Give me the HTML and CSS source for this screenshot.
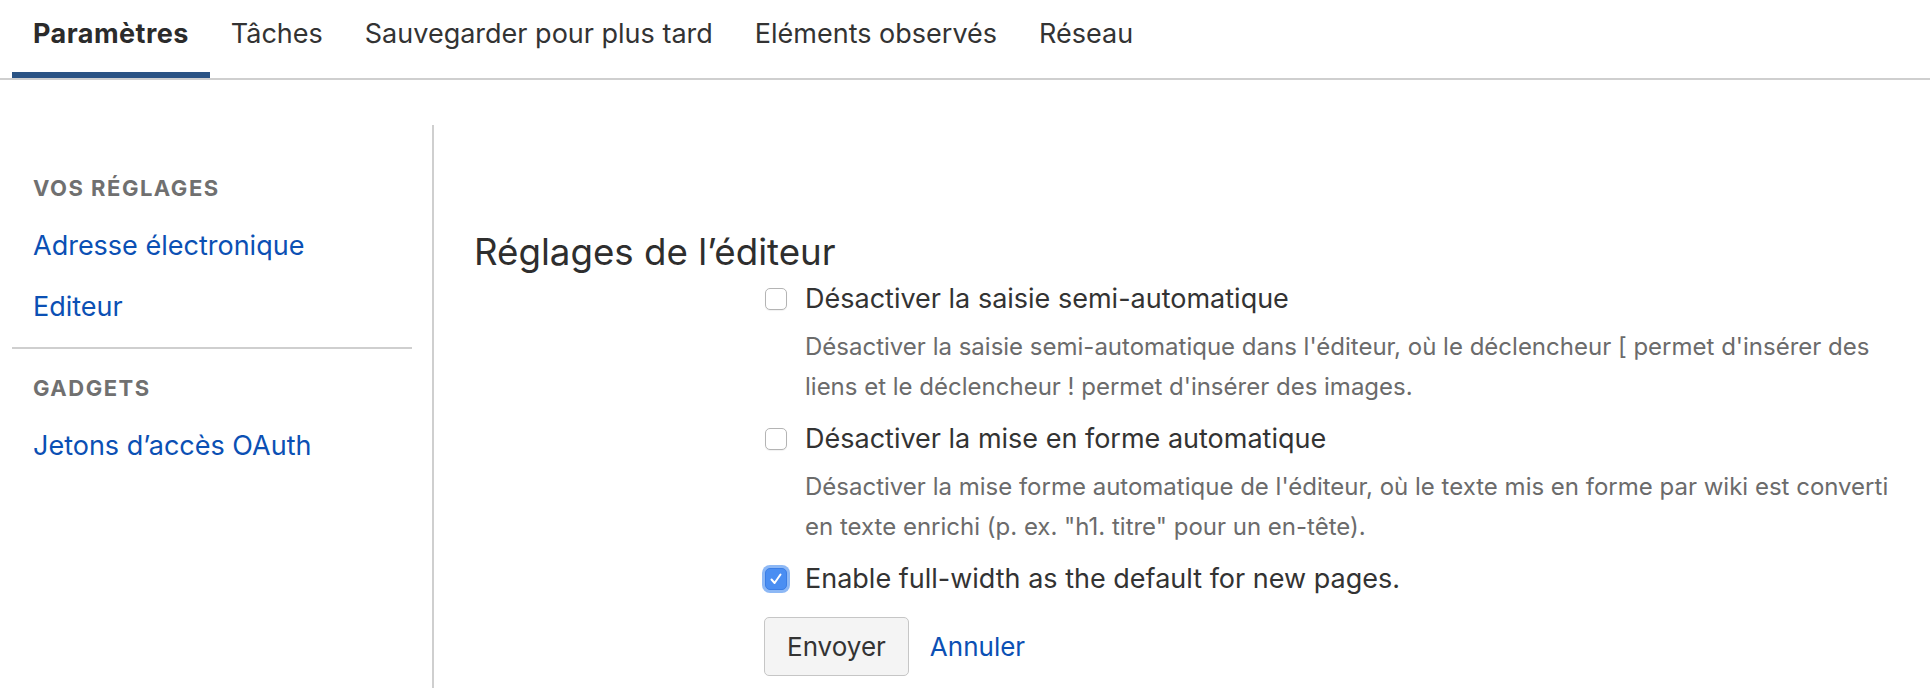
FILE: index.html
```html
<!DOCTYPE html>
<html lang="fr">
<head>
<meta charset="utf-8">
<title>Paramètres</title>
<link rel="stylesheet" href="styles.css">
</head>
<body>
<nav class="tabs">
  <a class="tab active" href="#">Paramètres</a>
  <a class="tab" href="#">Tâches</a>
  <a class="tab" href="#">Sauvegarder pour plus tard</a>
  <a class="tab" href="#">Eléments observés</a>
  <a class="tab" href="#">Réseau</a>
</nav>
<div class="layout">
  <aside class="sidebar">
    <div class="side-section">
      <h3 class="side-title">VOS RÉGLAGES</h3>
      <a class="side-link" href="#">Adresse électronique</a>
      <a class="side-link" href="#">Editeur</a>
    </div>
    <hr class="side-sep">
    <div class="side-section">
      <h3 class="side-title">GADGETS</h3>
      <a class="side-link" href="#">Jetons d’accès OAuth</a>
    </div>
  </aside>
  <main class="main">
    <h2 class="heading">Réglages de l’éditeur</h2>
    <form class="form">
      <div class="option">
        <label class="option-row"><span class="cb"></span><span>Désactiver la saisie semi-automatique</span></label>
        <p class="desc">Désactiver la saisie semi-automatique dans l'éditeur, où le déclencheur [ permet d'insérer des liens et le déclencheur ! permet d'insérer des images.</p>
      </div>
      <div class="option">
        <label class="option-row"><span class="cb"></span><span>Désactiver la mise en forme automatique</span></label>
        <p class="desc">Désactiver la mise forme automatique de l'éditeur, où le texte mis en forme par wiki est converti en texte enrichi (p. ex. "h1. titre" pour un en-tête).</p>
      </div>
      <div class="option">
        <label class="option-row"><span class="cb checked"><svg viewBox="0 0 22 22" width="22" height="22"><path d="M6.5 11.5 L9.6 15 L15.5 6.5" fill="none" stroke="#fff" stroke-width="2" stroke-linecap="round" stroke-linejoin="round"/></svg></span><span>Enable full-width as the default for new pages.</span></label>
      </div>
      <div class="buttons">
        <button type="button" class="btn">Envoyer</button>
        <a class="cancel" href="#">Annuler</a>
      </div>
    </form>
  </main>
</div>
</body>
</html>
```
FILE: styles.css
```css
html, body {
  margin: 0;
  padding: 0;
  height: 100%;
  background: #fff;
}
body {
  font-family: "Inter", "Liberation Sans", sans-serif;
  color: #333;
  display: flex;
  flex-direction: column;
  overflow: hidden;
}
a { text-decoration: none; }

/* Tabs */
.tabs {
  display: flex;
  padding-left: 12px;
  border-bottom: 2px solid #cfcfcf;
  flex: none;
}
.tab {
  position: relative;
  padding: 14px 21px 24px;
  font-size: 27px;
  line-height: 40px;
  color: #333;
}
.tab.active {
  font-weight: 700;
  letter-spacing: 0.45px;
  color: #2b2b2b;
}
.tab.active::after {
  content: "";
  position: absolute;
  left: 0;
  right: 0;
  bottom: 0;
  height: 6px;
  background: #2a5384;
}

/* Layout */
.layout {
  display: flex;
  flex: 1;
  margin-top: 45px;
  padding-left: 12px;
}
.sidebar {
  width: 400px;
  padding-right: 20px;
  border-right: 2px solid #cfcfcf;
  padding-top: 48px;
  flex: none;
}
.side-section {
  display: flex;
  flex-direction: column;
}
.side-title {
  margin: 0 0 12px;
  padding-left: 21px;
  font-size: 22px;
  line-height: 30px;
  font-weight: 700;
  letter-spacing: 1.5px;
  color: #707070;
}
.side-link {
  padding: 10px 0 10px 21px;
  font-size: 27px;
  line-height: 41px;
  color: #0b50b4;
}
.side-sep {
  border: 0;
  height: 2px;
  background: #cfcfcf;
  margin: 10px 0 24px;
}

/* Main */
.main {
  flex: 1;
  padding: 105px 35px 0 40px;
}
.heading {
  margin: 0;
  font-size: 36.7px;
  line-height: 44px;
  font-weight: 400;
  color: #2e2e2e;
}
.form {
  margin: 5px 0 0 291px;
}
.option + .option {
  margin-top: 12px;
}
.option-row {
  display: flex;
  align-items: center;
  gap: 18px;
  height: 40px;
  font-size: 27px;
  line-height: 40px;
  color: #333;
}
.cb {
  width: 22px;
  height: 22px;
  box-sizing: border-box;
  border: 1px solid #b4b4b4;
  border-radius: 5px;
  background: #fff;
  box-shadow: 0 1px 1px rgba(0,0,0,0.06);
  flex: none;
  display: flex;
}
.cb.checked {
  background: #4a8ef2;
  border-color: #3b7ee6;
  box-shadow: 0 0 0 3px #8db8f5;
}
.cb svg {
  margin: -1px;
}
.desc {
  margin: 8px 0 0 40px;
  max-width: 1090px;
  font-size: 24px;
  line-height: 40px;
  color: #6b6b6b;
}
.buttons {
  display: flex;
  align-items: center;
  margin-top: 18px;
  margin-left: -1px;
}
.btn {
  height: 59px;
  box-sizing: border-box;
  padding: 0 22px;
  border: 1px solid #c6c6c6;
  border-radius: 5px;
  background: #f4f4f4;
  font-family: inherit;
  font-size: 26px;
  line-height: 57px;
  color: #333;
}
.cancel {
  margin-left: 21px;
  font-size: 26px;
  color: #0b50b4;
}
```
